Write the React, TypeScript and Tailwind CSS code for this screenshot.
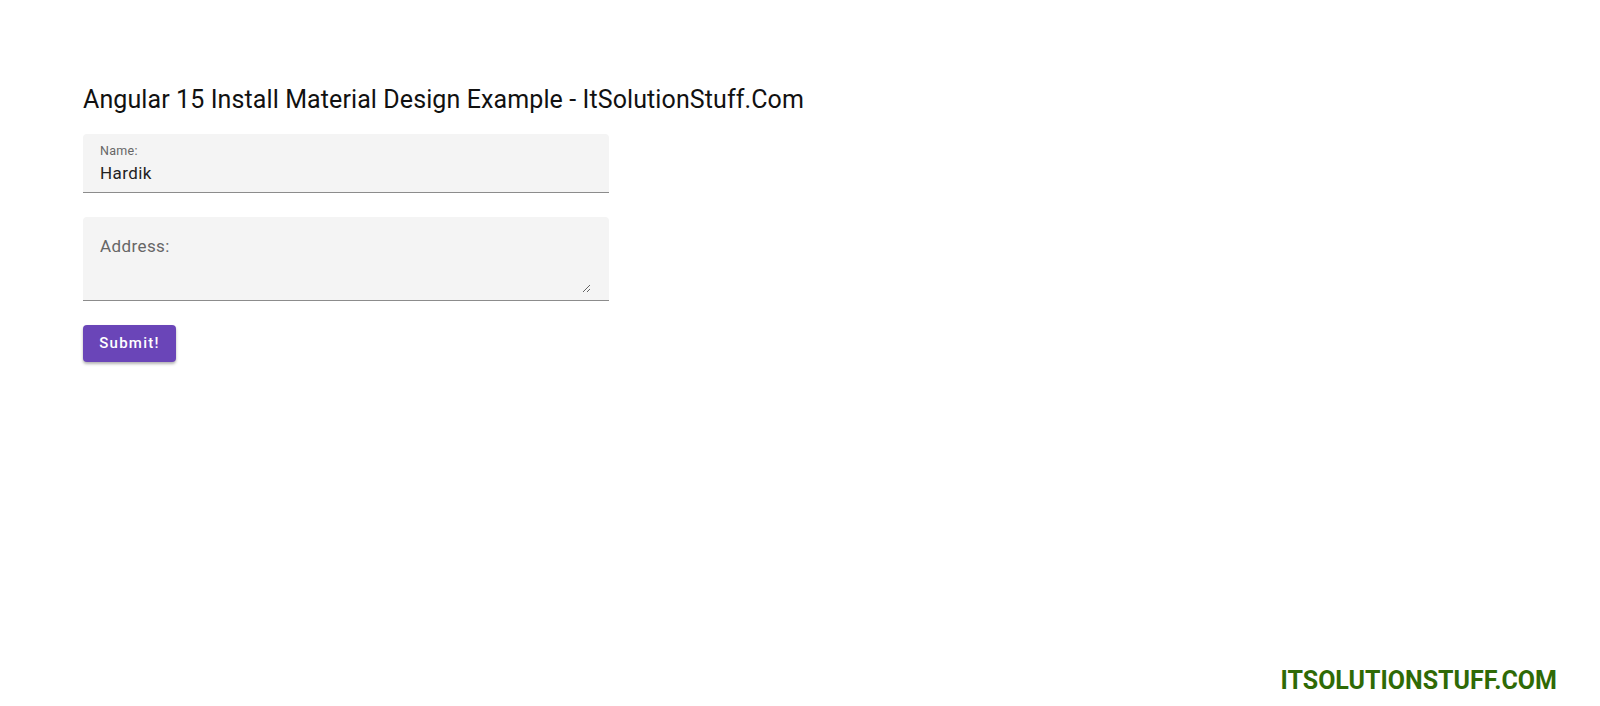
import React from "react";

const App = () => {
  return (
    <div className="min-h-[706px] w-full flex flex-col bg-white font-['Roboto','Liberation_Sans',sans-serif]">
      {/* Form */}
      <main className="pl-[83px] pt-[85px]">
        <h1 className="text-[25px] leading-[30px] font-normal tracking-[0.1px] text-[#111]">
          Angular 15 Install Material Design Example - ItSolutionStuff.Com
        </h1>

        <form className="mt-[19px] w-[526px] flex flex-col" onSubmit={(e) => e.preventDefault()}>
          {/* Name */}
          <div className="h-[59px] bg-[#f4f4f4] rounded-t-[4px] border-b border-[#8c8c8c] px-[17px] pt-[10px]">
            <label className="block text-[12.5px] leading-[14px] tracking-[0.3px] text-[#666]">Name:</label>
            <input
              defaultValue="Hardik"
              className="mt-[5px] block w-full bg-transparent outline-none text-[17px] leading-[20px] tracking-[0.4px] text-[#222]"
            />
          </div>

          {/* Address */}
          <div className="mt-[24px] h-[84px] bg-[#f4f4f4] rounded-t-[4px] border-b border-[#8c8c8c] pl-[17px] pr-[18px] pt-[19px] pb-[7px]">
            <textarea
              placeholder="Address:"
              className="block w-full h-full bg-transparent outline-none text-[17px] leading-[20px] text-[#222] placeholder:text-[#666] tracking-[0.4px]"
            />
          </div>

          <div className="mt-[24px]">
            <button
              type="submit"
              className="w-[93px] h-[37px] rounded-[4px] bg-[#6a45b8] text-white text-[15px] font-medium tracking-[1.25px] shadow-[0_2px_3px_rgba(0,0,0,0.3)]"
            >
              Submit!
            </button>
          </div>
        </form>
      </main>

      {/* Watermark */}
      <footer className="mt-auto self-end pr-[43px] pb-[10px]">
        <span className="text-[25px] leading-[30px] font-bold text-[#2f6a06]">ITSOLUTIONSTUFF.COM</span>
      </footer>
    </div>
  );
};

export default App;
